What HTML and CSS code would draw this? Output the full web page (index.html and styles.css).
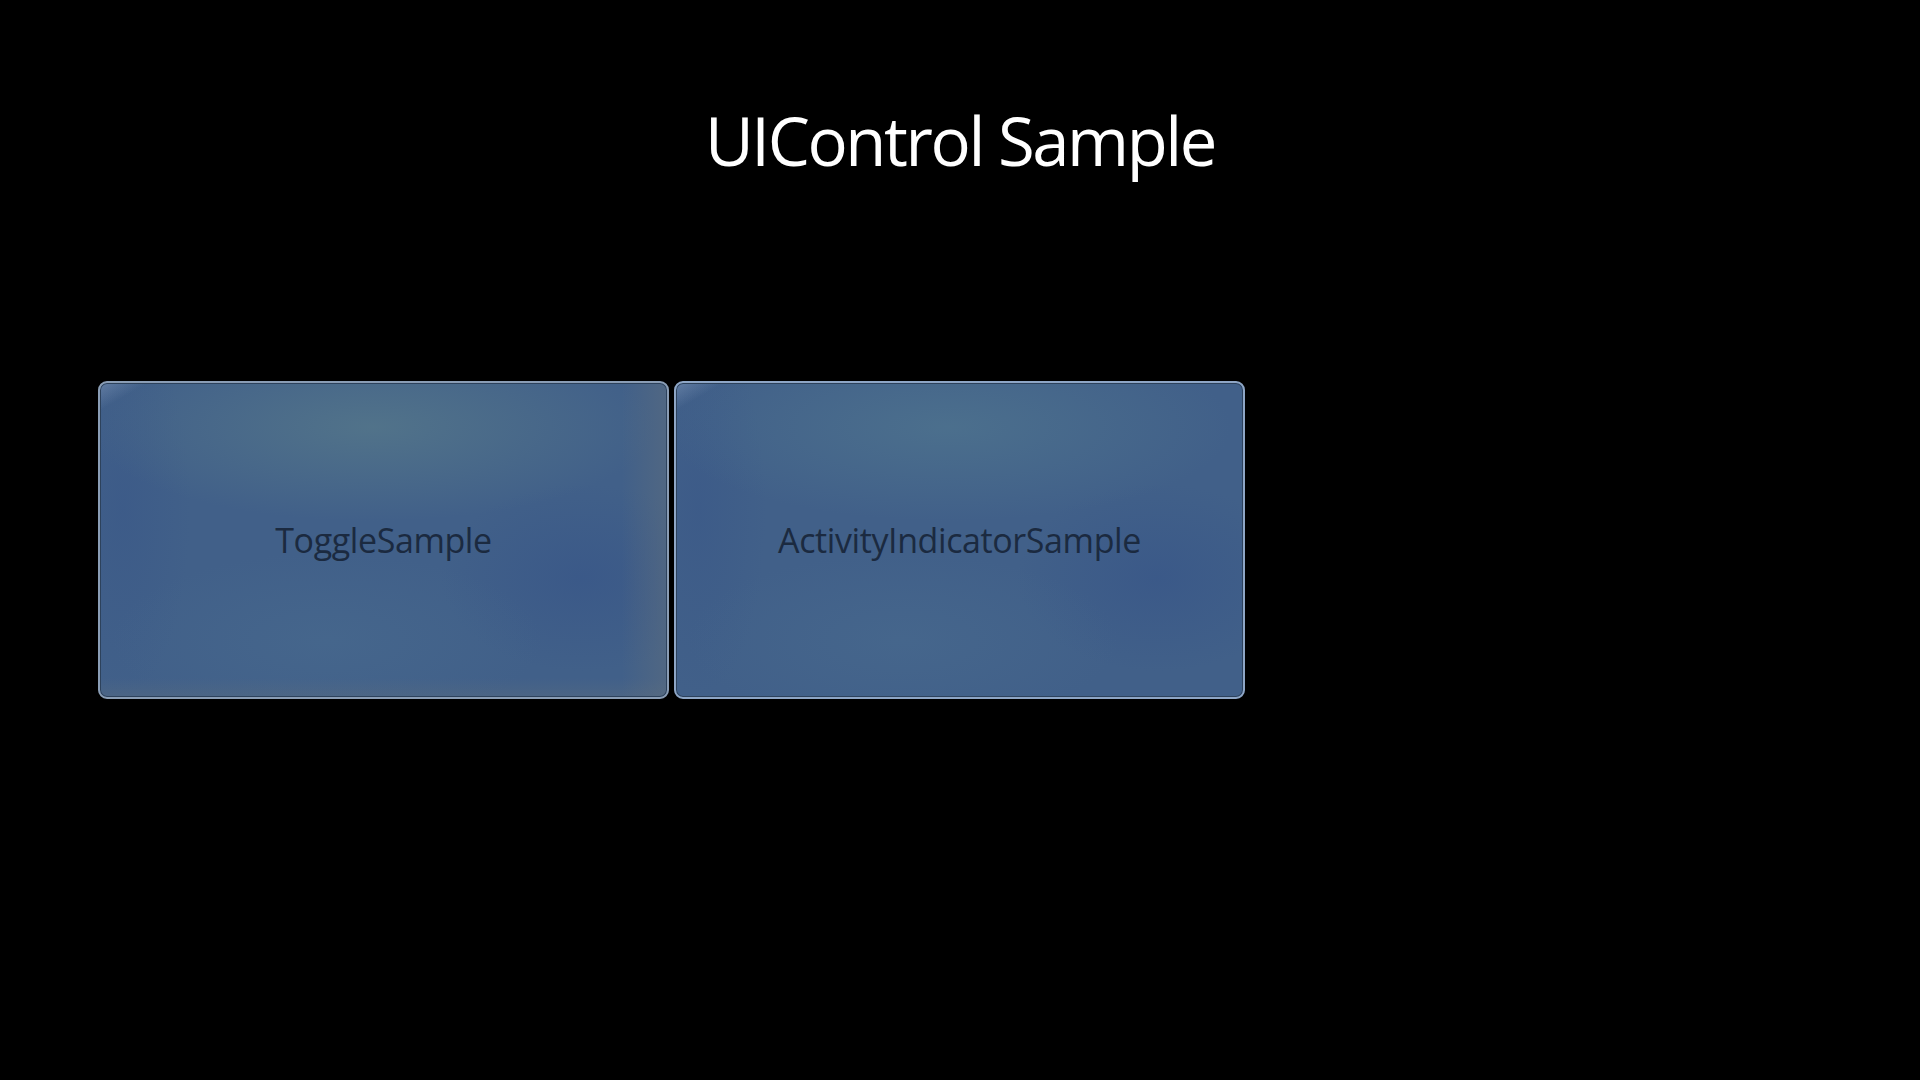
FILE: index.html
```html
<!DOCTYPE html>
<html>
<head>
    <title>UIControl Sample</title>
    <meta charset="UTF-8">
    <meta name="viewport" content="width=device-width, initial-scale=1.0">
    <link rel="stylesheet" href="styles.css">
</head>
<body>
<h1 class="title">UIControl Sample</h1>
<div class="tiles">
    <div class="tile tile-hover">
        <span class="tile-label">ToggleSample</span>
    </div>
    <div class="tile">
        <span class="tile-label">ActivityIndicatorSample</span>
    </div>
</div>
</body>
</html>
```

FILE: styles.css
```css
body {
  margin: 0;
  background: #000;
  font-family: "Open Sans", "Noto Sans", sans-serif;
  height: 1080px;
  overflow: hidden;
}
.title {
  margin: 0;
  padding-top: 107px;
  text-align: center;
  color: #fff;
  font-size: 67px;
  font-weight: 400;
  line-height: 1;
  letter-spacing: -2.4px;
}
.tiles {
  display: flex;
  gap: 5px;
  padding-left: 98px;
  margin-top: 207px;
}
.tile {
  width: 571px;
  height: 318px;
  box-sizing: border-box;
  border-radius: 9px;
  border: 2px solid #8ea6c6;
  box-shadow: inset 0 0 0 1px #2d425c;
  display: flex;
  align-items: center;
  justify-content: center;
  background:
    linear-gradient(150deg, rgba(160, 180, 210, 0.35) 0, rgba(160, 180, 210, 0) 24px),
    radial-gradient(ellipse 50% 30% at 48% 14%, rgba(78, 115, 142, 0.8), rgba(78, 115, 142, 0)),
    radial-gradient(ellipse 38% 28% at 40% 82%, rgba(72, 106, 142, 0.6), rgba(72, 106, 142, 0)),
    radial-gradient(ellipse 25% 30% at 85% 62%, rgba(56, 86, 136, 0.7), rgba(56, 86, 136, 0)),
    radial-gradient(ellipse 12% 60% at 4% 40%, rgba(58, 88, 136, 0.6), rgba(58, 88, 136, 0)),
    #416089;
}
.tile-hover {
  background:
    linear-gradient(150deg, rgba(160, 180, 210, 0.35) 0, rgba(160, 180, 210, 0) 24px),
    linear-gradient(90deg, rgba(95, 110, 125, 0) 92%, rgba(95, 110, 125, 0.5) 100%),
    linear-gradient(0deg, rgba(95, 110, 125, 0.35) 0, rgba(95, 110, 125, 0) 6%),
    radial-gradient(ellipse 50% 30% at 48% 14%, rgba(84, 118, 138, 0.85), rgba(84, 118, 138, 0)),
    radial-gradient(ellipse 38% 28% at 40% 82%, rgba(72, 106, 142, 0.6), rgba(72, 106, 142, 0)),
    radial-gradient(ellipse 25% 30% at 85% 62%, rgba(56, 86, 136, 0.7), rgba(56, 86, 136, 0)),
    radial-gradient(ellipse 12% 60% at 4% 40%, rgba(58, 88, 136, 0.6), rgba(58, 88, 136, 0)),
    #416089;
  border-color: #8a9db5;
}
.tile-label {
  color: #1b2a40;
  font-size: 34px;
  letter-spacing: -0.4px;
}
```
